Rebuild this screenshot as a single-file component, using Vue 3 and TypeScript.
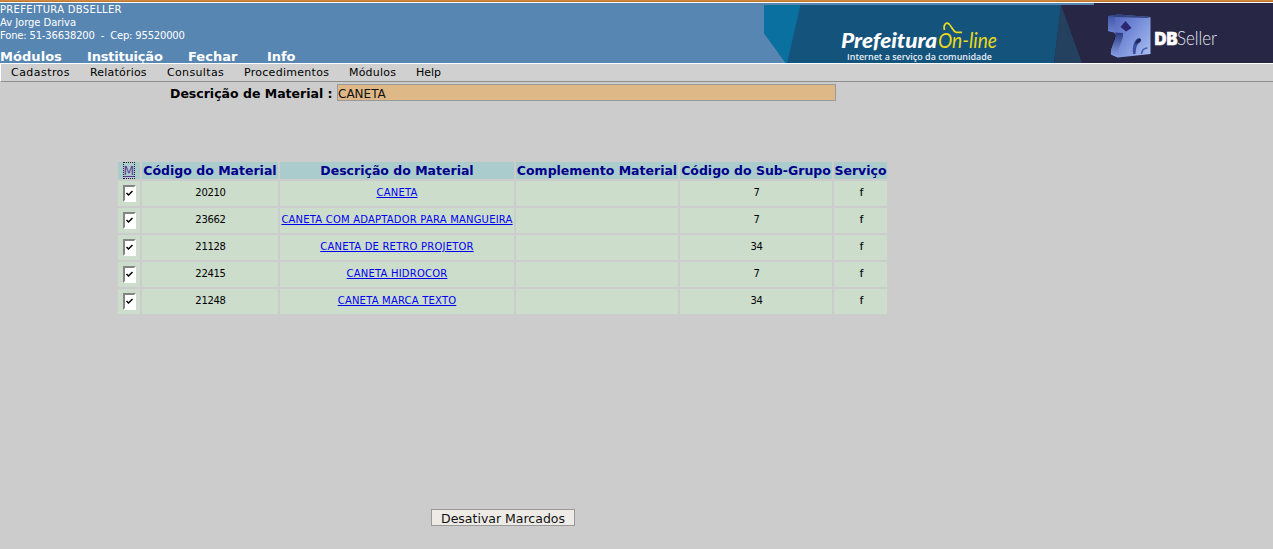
<script setup lang="ts">
interface MenuItem {
  label: string
  tracking: number
}

interface Material {
  code: number
  description: string
  complement: string
  subgroup: number
  service: string
}

const mainMenu: MenuItem[] = [
  { label: 'Módulos', tracking: 0.05 },
  { label: 'Instituição', tracking: -0.2 },
  { label: 'Fechar', tracking: 0 },
  { label: 'Info', tracking: -0.1 },
]
const subMenu: MenuItem[] = [
  { label: 'Cadastros', tracking: 0.45 },
  { label: 'Relatórios', tracking: 0.2 },
  { label: 'Consultas', tracking: 0.35 },
  { label: 'Procedimentos', tracking: 0.28 },
  { label: 'Módulos', tracking: 0.2 },
  { label: 'Help', tracking: 0 },
]
const headings: string[] = [
  'Código do Material',
  'Descrição do Material',
  'Complemento Material',
  'Código do Sub-Grupo',
  'Serviço',
]
const materials: Material[] = [
  { code: 20210, description: 'CANETA', complement: '', subgroup: 7, service: 'f' },
  { code: 23662, description: 'CANETA COM ADAPTADOR PARA MANGUEIRA', complement: '', subgroup: 7, service: 'f' },
  { code: 21128, description: 'CANETA DE RETRO PROJETOR', complement: '', subgroup: 34, service: 'f' },
  { code: 22415, description: 'CANETA HIDROCOR', complement: '', subgroup: 7, service: 'f' },
  { code: 21248, description: 'CANETA MARCA TEXTO', complement: '', subgroup: 34, service: 'f' },
]
</script>

<template>
  <div class="page">
    <header class="top">
      <div class="info">
        <div class="org">
          <div class="name">PREFEITURA DBSELLER</div>
          <div>Av Jorge Dariva</div>
          <div class="phone">Fone: 51-36638200&nbsp; -&nbsp; Cep: 95520000</div>
        </div>
        <nav class="main-menu">
          <a v-for="item in mainMenu" :key="item.label" :style="{ letterSpacing: item.tracking + 'px' }">{{ item.label }}</a>
        </nav>
      </div>
      <svg class="banner" width="509" height="60" viewBox="764 3 509 60">
        <defs>
          <linearGradient id="face" x1="0" y1="0" x2="1" y2="0.8">
            <stop offset="0" stop-color="#4a5cb4" />
            <stop offset="0.5" stop-color="#7189d6" />
            <stop offset="1" stop-color="#a3b8ee" />
          </linearGradient>
          <linearGradient id="side" x1="0" y1="0" x2="0" y2="1">
            <stop offset="0" stop-color="#4256a8" />
            <stop offset="1" stop-color="#6a82cc" />
          </linearGradient>
          <linearGradient id="foot" x1="0" y1="0" x2="0" y2="1">
            <stop offset="0" stop-color="#2c3a84" />
            <stop offset="1" stop-color="#8ba2e4" />
          </linearGradient>
        </defs>
        <path d="M764 5H1100V63H786L764 33Z" fill="#14547c" />
        <path d="M764 5H800.500L787 63H785.500L764 33Z" fill="#0a70a0" />
        <path d="M1061 5H1094V3H1273V63H1054Z" fill="#272644" />
        <path d="M1061 5L1082 63H1054Z" fill="#24425f" />
        <text x="841" y="48" class="brand" textLength="96" lengthAdjust="spacingAndGlyphs">Prefeitura</text>
        <text x="938" y="48" class="online" textLength="59" lengthAdjust="spacingAndGlyphs">On-line</text>
        <path d="M944.500 30C943 25 946 21.500 949 24C952 27 953 31.500 956 32.300H962" fill="none" stroke="#ecd81c" stroke-width="1.700" />
        <text x="847" y="59.500" class="slogan" textLength="145" lengthAdjust="spacingAndGlyphs">Internet a serviço da comunidade</text>
        <path d="M1108 16L1118 14.500L1150.500 17V54L1118 57.500L1111 54.500C1110 48 1116 41 1116 35L1114 32.500L1108 31Z" fill="url(#face)" />
        <path d="M1108 16L1115 17V32.500L1108 31Z" fill="url(#side)" />
        <path d="M1115 32.500L1123 33C1124 41 1117 46 1118 57.500L1111 54.500C1110 48 1116 41 1116 35Z" fill="url(#foot)" />
        <path d="M1108 16L1118 14.500L1150.500 17L1147 18L1115 17Z" fill="#34437f" />
        <path d="M1125.500 21L1131.500 28L1126 31.500L1120.500 27Z" fill="#2b2870" />
        <path d="M1133 54C1132 45 1135 38 1139.500 38C1142 39 1141 42 1138.500 43.500C1136 46 1136 50 1135.500 54Z" fill="#3c4fa0" />
        <path d="M1135 44C1136 39.500 1139 37.500 1141 39.500C1141.500 42 1138 43 1135 44Z" fill="#20245c" />
        <path d="M1141.500 54C1142 50 1144 48 1147.500 48" fill="none" stroke="#4559a6" stroke-width="1.500" />
        <text x="1154.500" y="44.500" class="db" textLength="23" lengthAdjust="spacingAndGlyphs">DB</text>
        <text x="1177" y="44.500" class="seller" textLength="40" lengthAdjust="spacingAndGlyphs">Seller</text>
      </svg>
    </header>

    <nav class="sub-menu">
      <a v-for="item in subMenu" :key="item.label" :style="{ letterSpacing: item.tracking + 'px' }">{{ item.label }}</a>
    </nav>

    <main>
      <form class="search" @submit.prevent>
        <label for="material">Descrição de Material :</label>
        <input id="material" type="text" value="CANETA">
      </form>

      <div class="grid">
        <div class="head"><a class="mark">M</a></div>
        <div v-for="h in headings" :key="h" class="head">{{ h }}</div>
        <template v-for="m in materials" :key="m.code">
          <div class="cell check">
            <span class="box">
              <svg width="7" height="7" viewBox="0 0 7 7"><path d="M0.500 3L2.500 5L6.500 1" /></svg>
            </span>
          </div>
          <div class="cell number">{{ m.code }}</div>
          <div class="cell"><a class="link">{{ m.description }}</a></div>
          <div class="cell">{{ m.complement }}</div>
          <div class="cell number">{{ m.subgroup }}</div>
          <div class="cell service">{{ m.service }}</div>
        </template>
      </div>

      <button type="button" class="disable">Desativar Marcados</button>
    </main>
  </div>
</template>

<style>
body {
  background: #ccc;
  overflow: hidden;
}
</style>

<style scoped>
.page {
  height: 549px;
  background: #ccc;
  font-family: "DejaVu Sans", Verdana, sans-serif;
  color: #000;
}
.top {
  box-sizing: border-box;
  height: 63px;
  display: flex;
  justify-content: space-between;
  background: linear-gradient(#d08840 0 1px, #bd782f 1px 2px, #fff 2px 3px, #5886b2 3px);
  padding-top: 3px;
}
.info {
  width: 500px;
  color: #fff;
}
.org {
  height: 46px;
  font-size: 10px;
  line-height: 13px;
  white-space: nowrap;
  letter-spacing: -0.05px;
}
.name {
  letter-spacing: 0.32px;
}
.phone {
  letter-spacing: -0.18px;
}
.main-menu {
  display: grid;
  grid-template-columns: 87px 101px 79px 60px;
  height: 14px;
  font-size: 13px;
  font-weight: bold;
  line-height: 15px;
}
.banner {
  display: block;
}
.brand {
  font: italic 900 21px Lato, sans-serif;
  fill: #fff;
}
.online {
  font: italic 400 21px Lato, sans-serif;
  fill: #ecd81c;
}
.slogan {
  font: 600 9.5px "Open Sans", sans-serif;
  fill: #e6eef5;
}
.db {
  font: 900 17.5px Inter, sans-serif;
  fill: #fff;
  stroke: #fff;
  stroke-width: 0.5px;
}
.seller {
  font: 300 19px Lato, sans-serif;
  fill: #e4e4ee;
}
.sub-menu {
  box-sizing: border-box;
  height: 19px;
  display: grid;
  grid-template-columns: 79px 77px 77px 105px 67px 60px;
  padding-left: 10px;
  border-top: 1px solid #fff;
  border-left: 1px solid #fff;
  border-bottom: 1px solid #8c8f8c;
  background: #d0d0d0;
  font-size: 11px;
  line-height: 17px;
}
.search {
  display: flex;
  align-items: center;
  margin-left: 170px;
  padding-top: 2px;
  height: 17px;
}
.search label {
  width: 167px;
  padding-top: 1px;
  font-size: 12.5px;
  font-weight: bold;
  line-height: 19px;
  white-space: nowrap;
}
.search input {
  box-sizing: border-box;
  width: 499px;
  height: 17px;
  margin: 0;
  padding: 2px 0 0;
  border: 1px solid #999;
  border-radius: 0;
  outline: 0;
  background: #deb887;
  color: #111;
  font: 12px "DejaVu Sans", sans-serif;
}
.grid {
  display: grid;
  grid-template-columns: 22px 136px 234px 162px 152px 53px;
  grid-template-rows: 17px repeat(5, 25px);
  gap: 2px;
  width: 769px;
  margin: 61px 0 0 118px;
}
.head {
  background: #aacccc;
  color: #00008b;
  font-size: 12.5px;
  font-weight: bold;
  line-height: 18px;
  text-align: center;
  white-space: nowrap;
}
.mark {
  display: inline-block;
  height: 15px;
  outline: 1px dotted #222;
  color: #663399;
  font-weight: normal;
  line-height: 16px;
  text-decoration: underline;
}
.cell {
  background: #ccddcc;
  font-size: 10px;
  line-height: 23px;
  letter-spacing: 0.2px;
  text-align: center;
  white-space: nowrap;
}
.number {
  padding-left: 1px;
  letter-spacing: -0.3px;
}
.service {
  padding-left: 2px;
  -webkit-text-stroke: 0.2px #000;
}
.check {
  display: flex;
  align-items: center;
  justify-content: center;
}
.box {
  box-sizing: border-box;
  width: 13px;
  height: 17px;
  margin-left: 1px;
  display: flex;
  align-items: center;
  justify-content: center;
  border: 2px solid #fff;
  border-top-color: #848484;
  border-left-color: #848484;
  background: #fff;
}
.box path {
  fill: none;
  stroke: #000;
  stroke-width: 1.5;
}
.link {
  color: #0000ee;
  text-decoration: underline;
}
.disable {
  display: block;
  box-sizing: border-box;
  width: 144px;
  height: 17px;
  margin: 195px 0 0 431px;
  padding: 2px 0 0;
  border: 1px solid #999;
  border-radius: 0;
  background: #eeebe7;
  color: #111;
  font: 12.5px/14px "DejaVu Sans", sans-serif;
  white-space: nowrap;
}
</style>
